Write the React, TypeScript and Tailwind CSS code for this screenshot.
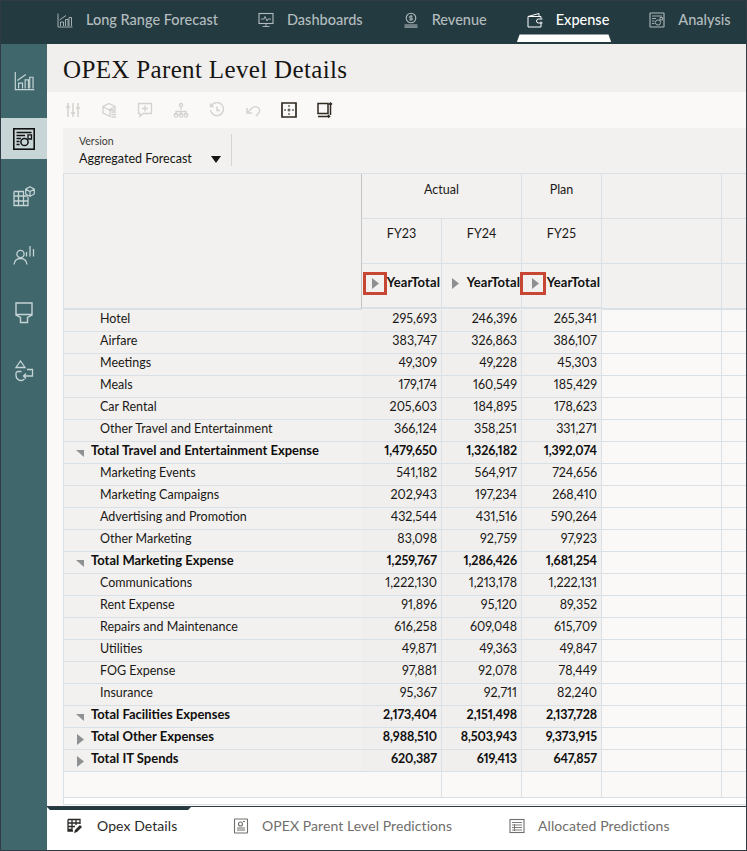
import React from "react";

type Row = { label: string; a: string; b: string; c: string; bold?: boolean; exp?: "down" | "right" };

const rows: Row[] = [
  { label: "Hotel", a: "295,693", b: "246,396", c: "265,341" },
  { label: "Airfare", a: "383,747", b: "326,863", c: "386,107" },
  { label: "Meetings", a: "49,309", b: "49,228", c: "45,303" },
  { label: "Meals", a: "179,174", b: "160,549", c: "185,429" },
  { label: "Car Rental", a: "205,603", b: "184,895", c: "178,623" },
  { label: "Other Travel and Entertainment", a: "366,124", b: "358,251", c: "331,271" },
  { label: "Total Travel and Entertainment Expense", a: "1,479,650", b: "1,326,182", c: "1,392,074", bold: true, exp: "down" },
  { label: "Marketing Events", a: "541,182", b: "564,917", c: "724,656" },
  { label: "Marketing Campaigns", a: "202,943", b: "197,234", c: "268,410" },
  { label: "Advertising and Promotion", a: "432,544", b: "431,516", c: "590,264" },
  { label: "Other Marketing", a: "83,098", b: "92,759", c: "97,923" },
  { label: "Total Marketing Expense", a: "1,259,767", b: "1,286,426", c: "1,681,254", bold: true, exp: "down" },
  { label: "Communications", a: "1,222,130", b: "1,213,178", c: "1,222,131" },
  { label: "Rent Expense", a: "91,896", b: "95,120", c: "89,352" },
  { label: "Repairs and Maintenance", a: "616,258", b: "609,048", c: "615,709" },
  { label: "Utilities", a: "49,871", b: "49,363", c: "49,847" },
  { label: "FOG Expense", a: "97,881", b: "92,078", c: "78,449" },
  { label: "Insurance", a: "95,367", b: "92,711", c: "82,240" },
  { label: "Total Facilities Expenses", a: "2,173,404", b: "2,151,498", c: "2,137,728", bold: true, exp: "down" },
  { label: "Total Other Expenses", a: "8,988,510", b: "8,503,943", c: "9,373,915", bold: true, exp: "right" },
  { label: "Total IT Spends", a: "620,387", b: "619,413", c: "647,857", bold: true, exp: "right" },
];

const S = ({ size = 16, children, className = "" }: { size?: number; children: React.ReactNode; className?: string }) => (
  <svg width={size} height={size} viewBox="0 0 16 16" fill="none" stroke="currentColor" strokeWidth="1.1" className={`shrink-0 ${className}`}>
    {children}
  </svg>
);

const ChartIcon = ({ size = 16 }: { size?: number }) => (
  <S size={size}>
    <path d="M1 1.5V15H15.5M2.5 8L9 3.5M3.5 14V10H6.5V14M8.5 14V7.5H11V14M12 14V5.5H14.5V14" strokeWidth="0.9" />
  </S>
);

const navItems: { label: string; icon: React.ReactNode; active?: boolean }[] = [
  { label: "Long Range Forecast", icon: <ChartIcon /> },
  {
    label: "Dashboards",
    icon: (
      <S>
        <rect x="1" y="1.5" width="14" height="10" />
        <path d="M3 7H6L7 4.5L9 9L10 7H13M8 11.5V14.5M4.5 14.5H11.5" strokeWidth="0.9" />
      </S>
    ),
  },
  {
    label: "Revenue",
    icon: (
      <S>
        <circle cx="8" cy="6" r="4.8" />
        <path d="M9.7 4.2H7.2Q6.2 4.2 6.2 5.1T7.2 6H8.8Q9.8 6 9.8 6.9T8.8 7.8H6.2M8 3V9" strokeWidth="0.9" />
        <path d="M1.5 13H14.5" strokeWidth="1" />
        <path d="M1.5 15H14.5" strokeWidth="1.2" />
      </S>
    ),
  },
  {
    label: "Expense",
    active: true,
    icon: (
      <S>
        <path d="M14 9.5V15H1V4.5L12 1.5V4.5H1M14 4.5H11M14 4.5V6.5" strokeWidth="1" />
        <path d="M15.5 7H11.5A2 2 0 0 0 11.5 11H15.5" strokeWidth="1" />
      </S>
    ),
  },
  {
    label: "Analysis",
    icon: (
      <S>
        <rect x="1" y="1" width="14" height="14" rx="0.5" />
        <path d="M3 4H13M3 6.5H7M3 9H5.5M3 11.5H5.5" strokeWidth="0.9" />
        <circle cx="9" cy="10.5" r="2.6" strokeWidth="0.9" />
        <path d="M11 5.5H13.5V8H11Z" strokeWidth="0.9" />
      </S>
    ),
  },
];

const sideIcons: React.ReactNode[] = [
  <ChartIcon size={21} />,
  <svg width="22" height="22" viewBox="0 0 22 22" fill="none" stroke="#111" strokeWidth="1.3">
    <rect x="0.8" y="0.8" width="20.4" height="20.4" strokeWidth="1.6" />
    <path d="M3.5 4.5H18.5M3.5 7.5H12M3.5 10.5H8M3.5 13.5H6.5M3.5 16.5H6.5" />
    <circle cx="11.5" cy="14" r="3.6" strokeWidth="1.5" />
    <path d="M15 6.8H18.5V11H15Z" />
  </svg>,
  <svg width="22" height="22" viewBox="0 0 22 22" fill="none" stroke="currentColor" strokeWidth="1.2">
    <path d="M1 5.5H11M1 5.5V19.5H15V11M1 10H15M1 15H15M5.5 5.5V19.5M10.5 5.5V19.5" strokeWidth="1.3" />
    <path d="M17 0.8L21.3 3.2V8L17 10.4L12.7 8V3.2ZM12.7 3.2L17 5.6L21.3 3.2M17 5.6V10.4" />
  </svg>,
  <svg width="22" height="22" viewBox="0 0 22 22" fill="none" stroke="currentColor" strokeWidth="1.3">
    <circle cx="7.5" cy="10" r="3.6" />
    <path d="M1 20.5C1.5 16.5 4 14.5 7.5 14.5S13.5 16.5 14 20.5M13.5 8V12.5M17 2V12.5M20.5 5V12.5" />
  </svg>,
  <svg width="18" height="22" viewBox="0 0 18 22" fill="none" stroke="currentColor" strokeWidth="1.4">
    <path d="M1 1H17V13L12.5 15.5V20.5H5.5V15.5L1 13Z M1 12.5H17" />
  </svg>,
  <svg width="20" height="22" viewBox="0 0 20 22" fill="none" stroke="currentColor" strokeWidth="1.3">
    <path d="M6.5 1L11 7.5H2Z" />
    <path d="M13 9.5H18.5V16H10M12 13.5L9.5 16L12 18.5" />
    <path d="M7.5 11.5H4A2 2 0 0 0 2 13.5V15.5A5 5 0 0 0 10.5 19" />
  </svg>,
];

const toolbarIcons: { dark?: boolean; el: React.ReactNode }[] = [
  { el: <path d="M3 1V15M8 1V15M13 1V15M1 5H5M6 11H10M11 6H15" strokeWidth="1.5" /> },
  { el: <path d="M8 1.5L14 4.5V8H9V14.5L2 11V4.5ZM2 4.5L8 8L14 4.5M10.5 10H15M10.5 12.5H15M10.5 15H15" strokeWidth="1.3" /> },
  { el: <path d="M1.5 1.5H14.5V11.5H6L3 14.5V11.5H1.5ZM8 3.5V9.5M5 6.5H11" strokeWidth="1.3" /> },
  { el: <path d="M8 4.5V8M3 13V9.5H13V13M8 9.5V13M8 1.5A1.6 1.6 0 1 0 8.01 1.5M3 11.5A1.8 1.8 0 1 0 3.01 11.5M8 11.5A1.8 1.8 0 1 0 8.01 11.5M13 11.5A1.8 1.8 0 1 0 13.01 11.5" strokeWidth="1.3" /> },
  { el: <path d="M2.5 3.5A6.5 6.5 0 1 1 1.5 8M1.5 1.5V4.5H4.5M8 4.5V8.5H11" strokeWidth="1.4" /> },
  { el: <path d="M2 6V11H7M2 11L7 6Q10 3.5 13 5.5T13.5 11.5L11 14" strokeWidth="1.4" /> },
  {
    dark: true,
    el: (
      <>
        <path d="M1 1H15V15H1Z" strokeWidth="1.7" />
        <path d="M8 3V5M8 6.5V9.5M8 11V13M3 8H5M6.5 8H9.5M11 8H13" strokeWidth="1" />
      </>
    ),
  },
  { dark: true, el: <path d="M1 1.5H11V11.5H1ZM1 14.5H12M13.5 1V13M12 2.5L13.5 1L15 2.5M11 13L12.5 14.5L11 15.5" strokeWidth="1.5" /> },
];

const TriRight = () => (
  <svg width="7" height="11" viewBox="0 0 7 11" className="shrink-0">
    <path d="M0 0L7 5.5L0 11Z" fill="#8d9192" />
  </svg>
);
const TriDown = () => (
  <svg width="8" height="8" viewBox="0 0 8 8" className="shrink-0">
    <path d="M0 1H8V8Z" fill="#8d9192" />
  </svg>
);

const font = "font-['Lato','Noto_Sans',sans-serif]";
const line = "border-[#d9e0e6]";

function HeaderCell({ text }: { text: string }) {
  return <div className="text-[12.5px] leading-[18px] text-[#1a1816] text-center pt-[7px] h-full">{text}</div>;
}

function FyCell({ text }: { text: string }) {
  return <div className="text-[12.5px] leading-[18px] text-[#1a1816] text-center pt-[6px] h-full">{text}</div>;
}

function YearTotal({ boxed, wide }: { boxed?: boolean; wide?: boolean }) {
  return (
    <div className={`relative h-[45px] pt-[14px] pl-[10px] border-r ${line} border-b-2`}>
      <TriRight />
      <span className="absolute right-[1px] top-[9px] text-[13px] tracking-[0.1px] leading-[18px] font-bold text-[#111]">YearTotal</span>
      {boxed && (
        <div className={`absolute top-[8px] h-[23px] border-[3px] border-[#c74634] ${wide ? "-left-[2px] w-[26px]" : "left-[1px] w-[24px]"}`} />
      )}
    </div>
  );
}

export default function App() {
  return (
    <div className={`w-[747px] h-[851px] overflow-hidden flex flex-col bg-[#faf9f7] border-l border-r border-b border-[#2f3b45] ${font}`}>
      <nav className="h-[44px] shrink-0 bg-[#233a40] flex items-center pl-[56px] pb-[6px] gap-[40px] whitespace-nowrap border-t border-[#2f3b45]">
        {navItems.map((n) => (
          <div key={n.label} className={`relative flex items-center gap-[13px] text-[14.5px] font-medium ${n.active ? "text-white" : "text-[#b3bcbe]"}`}>
            {n.icon}
            <span>{n.label}</span>
            {n.active && <div className="absolute left-[-10px] right-[-2px] bottom-[-12px] h-[8px] bg-white [clip-path:polygon(3%_0,97%_0,100%_100%,0_100%)]" />}
          </div>
        ))}
      </nav>

      <div className="flex-1 flex min-h-0">
        <aside className="w-[46px] shrink-0 bg-[#3f676c] flex flex-col pt-[16px] gap-[17px] text-[#c6d4d6]">
          {sideIcons.map((ic, i) => (
            <div key={i} className={`h-[41px] flex items-center justify-center ${i === 1 ? "bg-[#c7d5d6]" : ""}`}>
              {ic}
            </div>
          ))}
        </aside>

        <main className="flex-1 min-w-0 flex flex-col">
          <div className="h-[48px] shrink-0 bg-[#f0efed] pl-[16px] pt-[3px] flex items-center">
            <h1 className="font-['Liberation_Serif',serif] text-[25px] text-[#161513] tracking-[0.35px]">OPEX Parent Level Details</h1>
          </div>

          <div className="h-[36px] shrink-0 flex items-center pl-[18px] gap-[20px]">
            {toolbarIcons.map((t, i) => (
              <S key={i} className={t.dark ? "text-[#2f2a22]" : "text-[#d3d2d0]"}>
                {t.el}
              </S>
            ))}
          </div>

          <div className="flex-1 min-h-0 ml-[16px] flex flex-col pb-[1px]">
            <div className="h-[45px] shrink-0 bg-[#f2f1ef] flex items-start pl-[16px] pt-[6px]">
              <div className="w-[153px] pr-[10px] border-r border-[#d6d5d3] h-[32px]">
                <div className="text-[10.5px] leading-[14px] text-[#3d3b38]">Version</div>
                <div className="flex items-center justify-between mt-[3px]">
                  <span className="text-[12.5px] leading-[16px] text-[#161513]">Aggregated Forecast</span>
                  <svg width="10" height="7" viewBox="0 0 10 7"><path d="M0 0H10L5 7Z" fill="#161513" /></svg>
                </div>
              </div>
            </div>

            <div className={`flex-1 min-h-0 flex flex-col border-l border-t border-b ${line}`}>
              <div className="grid grid-cols-[298px_80px_80px_80px_120px_1fr] grid-rows-[45px_45px_46px] bg-[#f2f1ef] shrink-0">
                <div className={`row-span-3 border-r border-r-[#c4c4c4] border-b-2 ${line}`} />
                <div className={`col-span-2 border-r border-b ${line}`}><HeaderCell text="Actual" /></div>
                <div className={`border-r border-b ${line}`}><HeaderCell text="Plan" /></div>
                <div className={`border-r border-b ${line}`} />
                <div className={`border-b ${line}`} />
                <div className={`border-r border-b ${line}`}><FyCell text="FY23" /></div>
                <div className={`border-r border-b ${line}`}><FyCell text="FY24" /></div>
                <div className={`border-r border-b ${line}`}><FyCell text="FY25" /></div>
                <div className={`border-r border-b ${line}`} />
                <div className={`border-b ${line}`} />
                <YearTotal boxed />
                <YearTotal />
                <YearTotal boxed wide />
                <div className={`border-r border-b-2 ${line}`} />
                <div className={`border-b-2 ${line}`} />
              </div>

              <div className="shrink-0">
                {rows.map((r) => {
                  const label = r.bold ? "text-[13px] leading-[16px] font-bold text-[#0f0e0d]" : "text-[12.5px] text-[#1a1816]";
                  const num = `text-right pr-[4px] border-r ${line} text-[12.5px] proportional-nums ${r.bold ? "font-bold text-[#0f0e0d] tracking-[-0.1px]" : "text-[#1a1816]"}`;
                  return (
                    <div key={r.label} className={`grid grid-cols-[298px_80px_80px_80px_120px_1fr] h-[22px] border-b ${line} leading-[18px]`}>
                      <div className={`bg-[#f2f1ef] relative whitespace-nowrap ${label} ${r.bold ? "pl-[27px]" : "pl-[36px]"}`}>
                        {r.exp === "down" && <span className="absolute left-[12px] top-[7px]"><TriDown /></span>}
                        {r.exp === "right" && <span className="absolute left-[13px] top-[6px]"><TriRight /></span>}
                        {r.label}
                      </div>
                      <div className={`bg-[#f0efed] ${num}`}>{r.a}</div>
                      <div className={`bg-[#f0efed] ${num}`}>{r.b}</div>
                      <div className={`bg-[#f2f1ef] ${num}`}>{r.c}</div>
                      <div className={`border-r ${line}`} />
                      <div />
                    </div>
                  );
                })}
              </div>

              <div className={`grid grid-cols-[298px_80px_80px_80px_120px_1fr] h-[26px] shrink-0 border-b ${line}`}>
                <div />
                <div className={`border-r ${line}`} />
                <div className={`border-r ${line}`} />
                <div className={`border-r ${line}`} />
                <div className={`border-r ${line}`} />
                <div />
              </div>
              <div className="flex-1 bg-white" />
            </div>
          </div>

          <div className="relative h-[44px] shrink-0 bg-white border-t border-[#2f3b45] flex items-center whitespace-nowrap text-[14px] tracking-[0.08px] text-[#6f6e6c] pl-[20px] pb-[6px]">
            <div className="absolute left-0 top-0 w-[144px] h-[3px] bg-[#233a40] [clip-path:polygon(0_0,100%_0,98%_100%,2%_100%)]" />
            <div className="flex items-center gap-[14px] text-[#2b2a28] w-[166px]">
              <S>
                <path d="M1 1.5H13V6M1 1.5V13H6M1 5H13M1 8.5H8M1 11.5H5.5M5 1.5V13M9 1.5V7" strokeWidth="1.3" />
                <path d="M7 15L8 12L13 7L15 9L10 14Z" fill="currentColor" stroke="none" />
              </S>
              <span>Opex Details</span>
            </div>
            <div className="flex items-center gap-[13px] w-[276px]">
              <S>
                <rect x="1.5" y="1" width="13" height="14" rx="0.5" />
                <path d="M4 12H12M4 10H12" strokeWidth="1" />
                <circle cx="7.5" cy="6" r="2" />
                <path d="M10 3.5H12" />
              </S>
              <span>OPEX Parent Level Predictions</span>
            </div>
            <div className="flex items-center gap-[13px]">
              <S>
                <rect x="1" y="1.5" width="14" height="13" />
                <path d="M3 4.5H13M3 7H13M3 9.5H13M3 12H13M5.5 6V13" strokeWidth="0.9" />
              </S>
              <span>Allocated Predictions</span>
            </div>
          </div>
        </main>
      </div>
    </div>
  );
}
